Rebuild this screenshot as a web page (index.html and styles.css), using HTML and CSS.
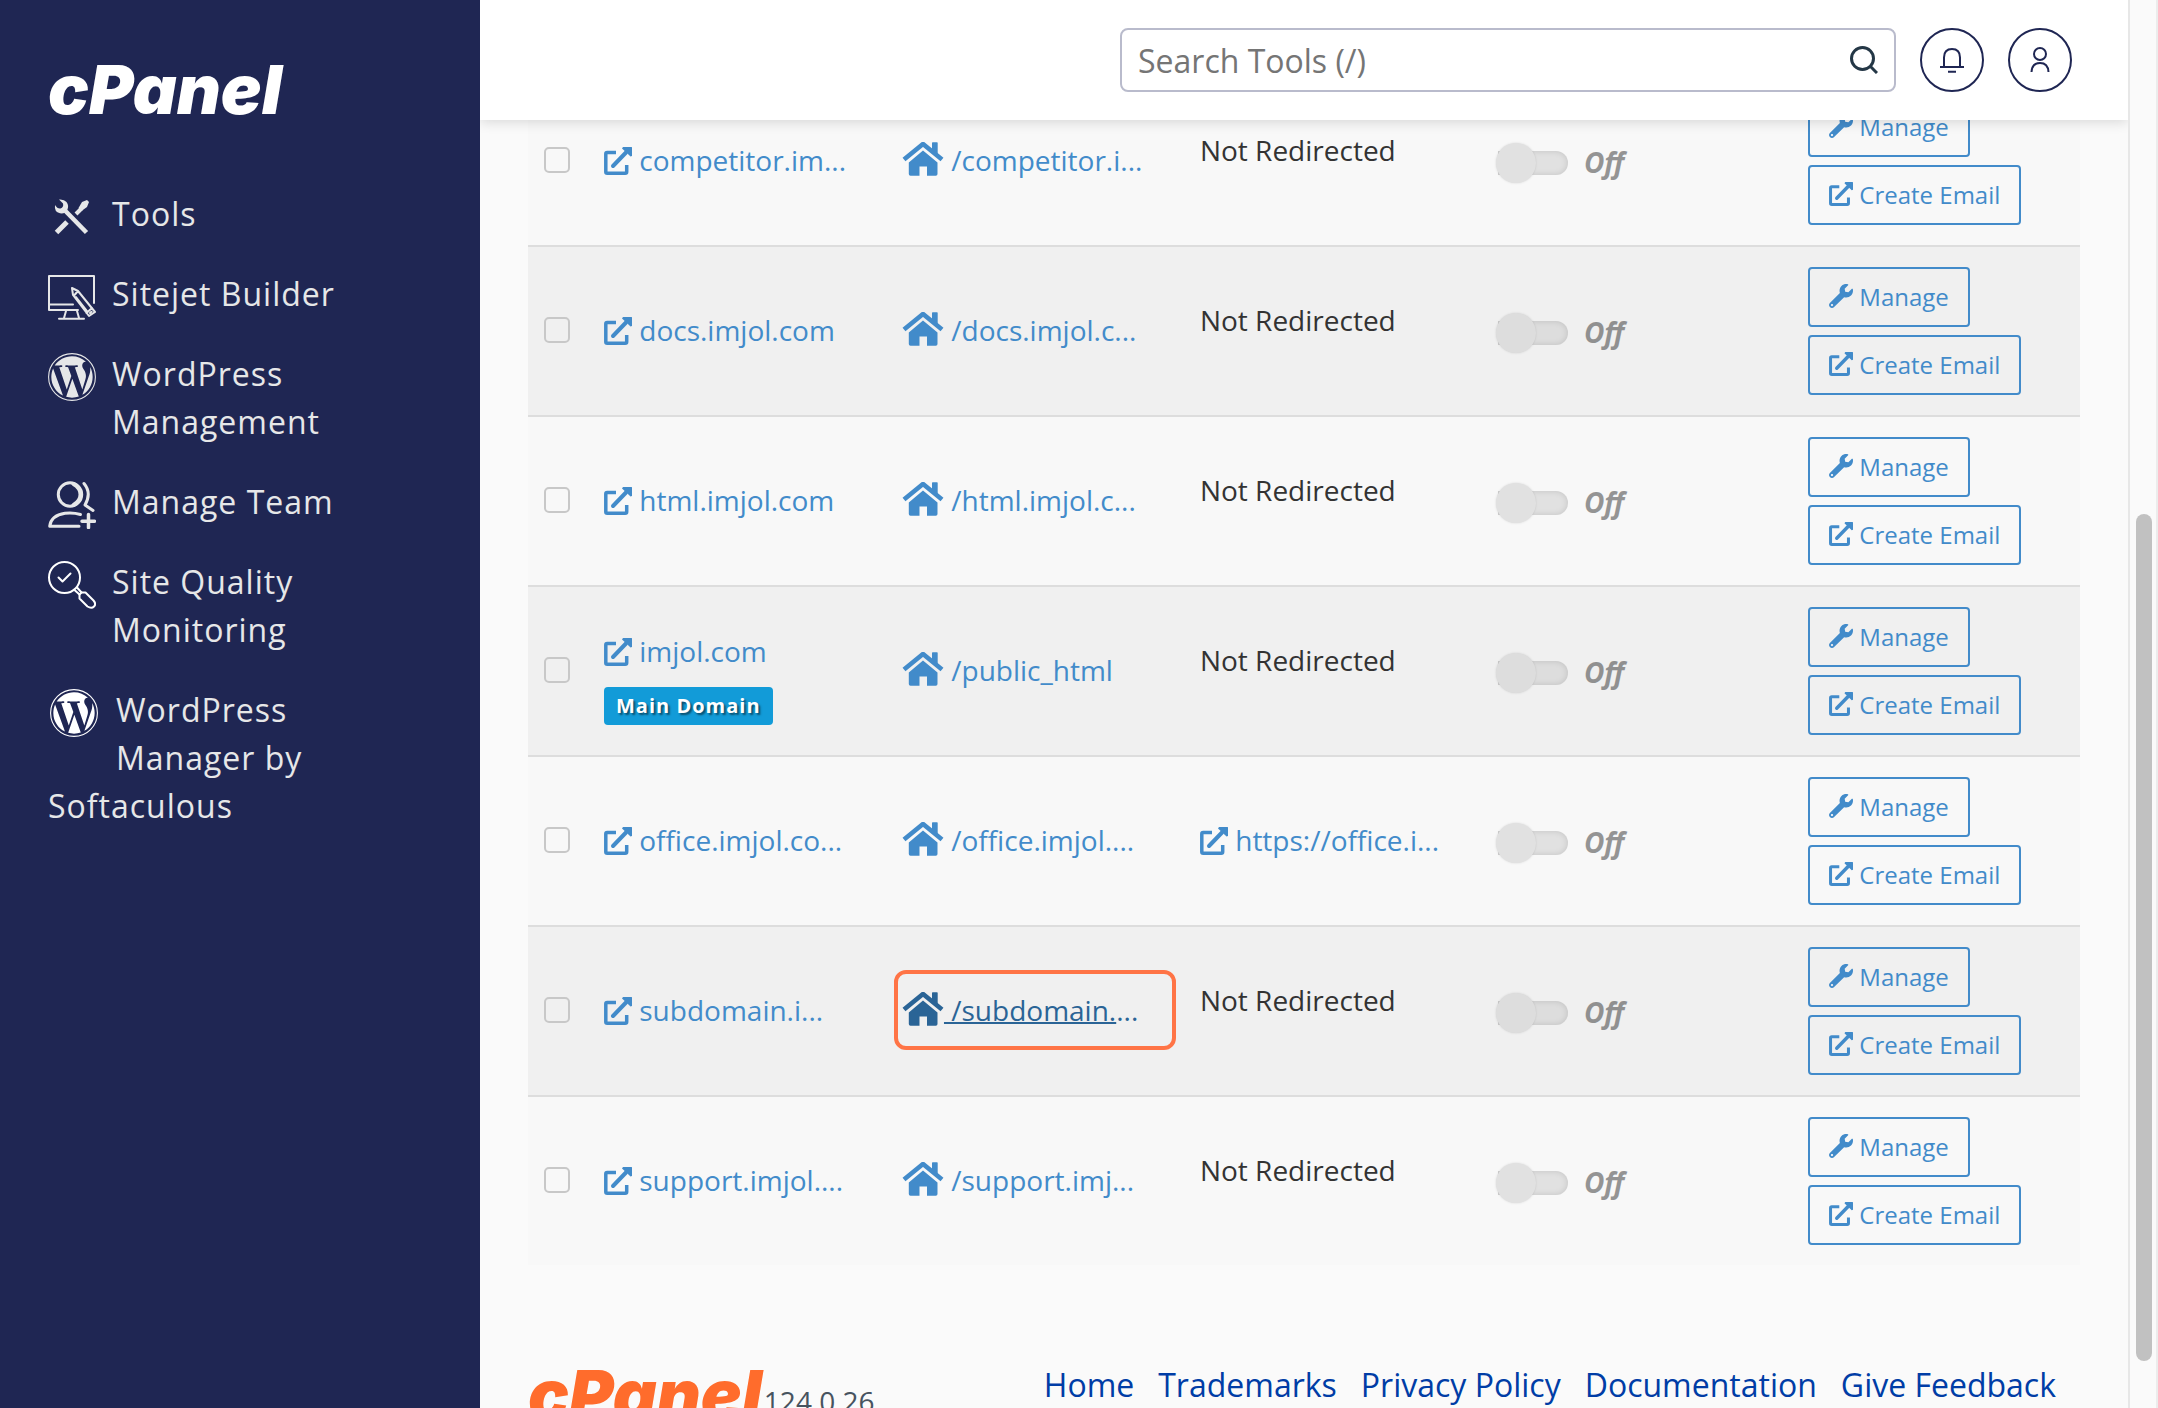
FILE: index.html
```html
<!DOCTYPE html>
<html lang="en">
<head>
  <meta charset="UTF-8">
  <meta name="viewport" content="width=device-width, initial-scale=1">
  <title>cPanel - Domains</title>
  <link rel="stylesheet" href="styles.css">
</head>
<body>
  <!-- shared icons -->
  <svg class="sprite" aria-hidden="true">
    <symbol id="i-external" viewBox="0 0 28 28">
      <path d="M12 5.500H3.200Q1.800 5.500 1.800 7V24.700Q1.800 26.200 3.200 26.200H21.200Q22.700 26.200 22.700 24.700V18" fill="none" stroke="currentColor" stroke-width="3.500"/>
      <path d="M9 19 22 5.500" fill="none" stroke="currentColor" stroke-width="4" stroke-linecap="round"/>
      <path d="M19 0H27.500Q28 0 28 .5V9L26.500 9.500 18 1.500z" fill="currentColor"/>
    </symbol>
    <symbol id="i-home" viewBox="0 0 42 34">
      <path d="M2 17.500 21 2 40 17.500" fill="none" stroke="currentColor" stroke-width="4.600"/>
      <path d="M30 1Q30 .3 30.700 .3H35Q35.700 .3 35.700 1V13L30 8z" fill="currentColor"/>
      <path d="M21 8.500 35.500 20.500V32Q35.500 33.700 33.800 33.700H25V24.500H17.500V33.700H8.500Q6.800 33.700 6.800 32V20.500z" fill="currentColor"/>
    </symbol>
    <symbol id="i-wrench" viewBox="0 0 512 512">
      <path fill="currentColor" d="M507.730 109.100c-2.240-9.030-13.540-12.090-20.120-5.510l-74.360 74.360-67.880-11.310-11.310-67.880 74.360-74.360c6.620-6.620 3.430-17.900-5.660-20.160-47.380-11.740-99.550.91-136.580 37.930-39.640 39.640-50.550 97.100-34.050 147.200L18.740 402.760c-24.990 24.990-24.990 65.510 0 90.500 24.990 24.990 65.510 24.990 90.500 0l213.210-213.210c50.120 16.710 107.470 5.680 147.370-34.220 37.070-37.070 49.700-89.320 37.910-136.730zM64 472c-13.250 0-24-10.750-24-24 0-13.260 10.750-24 24-24s24 10.740 24 24c0 13.250-10.750 24-24 24z"/>
    </symbol>
    <symbol id="i-wordpress" viewBox="0 0 24 24">
      <circle cx="12" cy="12" r="11.700" fill="none" stroke="currentColor" stroke-width=".55"/>
      <g transform="translate(.5 .5) scale(.958)">
        <path fill="currentColor" d="M21.469 6.825c.84 1.537 1.318 3.300 1.318 5.175 0 3.979-2.156 7.456-5.363 9.325l3.295-9.527c.615-1.540.82-2.771.82-3.864 0-.405-.026-.78-.07-1.110m-7.981.105c.647-.03 1.232-.105 1.232-.105.582-.075.514-.93-.067-.899 0 0-1.755.135-2.880.135-1.064 0-2.850-.15-2.850-.15-.585-.03-.661.855-.075.885 0 0 .54.061 1.125.09l1.680 4.605-2.370 7.080L5.354 6.900c.649-.03 1.234-.1 1.234-.1.585-.075.516-.93-.065-.896 0 0-1.746.138-2.874.138-.2 0-.438-.008-.69-.015C4.911 3.150 8.235 1.215 12 1.215c2.809 0 5.365 1.072 7.286 2.833-.046-.003-.091-.009-.141-.009-1.060 0-1.812.923-1.812 1.914 0 .89.513 1.643 1.060 2.531.411.72.89 1.643.89 2.977 0 .915-.354 1.994-.821 3.479l-1.075 3.585-3.900-11.610.001.014zM12 22.784c-1.059 0-2.081-.153-3.048-.437l3.237-9.406 3.315 9.087c.024.053.05.101.078.149-1.120.393-2.325.609-3.582.609M1.211 12c0-1.564.336-3.050.935-4.390L7.290 21.709C3.694 19.960 1.212 16.271 1.211 12"/>
      </g>
    </symbol>
  </svg>

  <div class="layout">
    <aside class="sidebar">
      <a class="logo" href="#" aria-label="cPanel home">cPanel</a>
      <nav class="nav">
        <a class="nav-link" href="#">
          <svg class="nav-icon" viewBox="0 0 48 48">
            <path d="M16.500 17 38.500 39.500" stroke="currentColor" stroke-width="4.500"/>
            <path d="M7 12Q6 19 12 20.300Q17 21 19 17.500Q21.500 13 18.500 9Q16 6 11 6.500L15 10.500Q16 14 12.500 15.500Q9.500 16 7 12z" fill="currentColor"/>
            <path d="M8.500 39.500 19 29" stroke="currentColor" stroke-width="5"/>
            <path d="M28 21 33.500 15.500" stroke="currentColor" stroke-width="4"/>
            <path d="M30.500 15 34 9 39 7 41 9 39 14 33.500 18z" fill="currentColor"/>
          </svg>
          <span>Tools</span>
        </a>
        <a class="nav-link" href="#">
          <svg class="nav-icon" viewBox="0 0 48 48" fill="none" stroke="currentColor" stroke-width="2" stroke-linecap="round" stroke-linejoin="round">
            <path d="M46 30V3H1V37H30M1 31.500H25M18 38 16 45M29 38 31 45M11 45.800H36"/>
            <path d="M24 15 30 18 47 39 41 43 25 22zM26.500 22 30 18M38.500 40 44 35M28 24 39 38M42 40 43.500 38.700"/>
          </svg>
          <span>Sitejet Builder</span>
        </a>
        <a class="nav-link" href="#">
          <svg class="nav-icon"><use href="#i-wordpress"/></svg>
          <span>WordPress Management</span>
        </a>
        <a class="nav-link" href="#">
          <svg class="nav-icon" viewBox="0 0 48 48" fill="none" stroke="currentColor" stroke-width="3" stroke-linecap="round" stroke-linejoin="round">
            <circle cx="22" cy="13.500" r="11.700"/>
            <path d="M25.500 3Q32.500 7 32.500 13.500T25.500 24" stroke-width="4"/>
            <path d="M32.500 33.500Q25 31.300 17 32.300Q3 34.500 1.700 45.300H31"/>
            <path d="M36 2.500Q44 12 37 24L45 29.500"/>
            <path d="M40.500 33.500V46.500M34 40.300H46.500" stroke-width="3.500"/>
          </svg>
          <span>Manage Team</span>
        </a>
        <a class="nav-link" href="#">
          <svg class="nav-icon nav-icon-white" viewBox="0 0 48 48" fill="none" stroke="currentColor" stroke-width="2" stroke-linecap="round" stroke-linejoin="round">
            <circle cx="16.500" cy="16.500" r="15.500"/>
            <path d="M10.500 16.500 14.500 20.500 22.500 12.500"/>
            <path d="M26.500 29 31.500 33.500M29 26.500 33.500 31.500"/>
            <path d="M31.500 37.500V33.500L33.500 31.500H37.500L45.500 39.500Q48.500 43 46 45.500T39.500 45.500z"/>
          </svg>
          <span>Site Quality Monitoring</span>
        </a>
        <a class="nav-link nav-link-plugin" href="#">
          <svg class="nav-icon nav-icon-white"><use href="#i-wordpress"/></svg>
          WordPress Manager by Softaculous
        </a>
      </nav>
    </aside>

    <div class="main">
      <header class="topbar">
        <div class="search">
          <input type="text" class="search-input" placeholder="Search Tools (/)" aria-label="Search Tools">
          <button type="button" class="search-btn" aria-label="Search">
            <svg viewBox="0 0 28 28" fill="none" stroke="currentColor" stroke-width="3">
              <circle cx="12.500" cy="12.500" r="11"/>
              <path d="M20.500 20.500 27 27"/>
            </svg>
          </button>
        </div>
        <button type="button" class="round-btn" aria-label="Notifications">
          <svg viewBox="0 0 28 28" fill="none" stroke="currentColor" stroke-width="2">
            <path d="M6 21V11.500Q6 3 14 3T22 11.500V21M2 21H26M10 25.700H18"/>
          </svg>
        </button>
        <button type="button" class="round-btn" aria-label="User preferences">
          <svg viewBox="0 0 28 28" fill="none" stroke="currentColor" stroke-width="2">
            <circle cx="14" cy="8" r="6"/>
            <path d="M5.500 26Q6 17 14 17T22.500 26"/>
          </svg>
        </button>
      </header>

      <div class="content">
        <table class="domains">
          <colgroup>
            <col class="col-check">
            <col class="col-domain">
            <col class="col-root">
            <col class="col-redirect">
            <col class="col-https">
            <col class="col-actions">
          </colgroup>
          <tbody>
            <tr>
              <td><input type="checkbox" class="check" aria-label="Select competitor.im..."></td>
              <td><a href="#"><svg class="icon-ext"><use href="#i-external"/></svg> competitor.im...</a></td>
              <td><a href="#"><svg class="icon-home"><use href="#i-home"/></svg> /competitor.i...</a></td>
              <td><p class="no-redirect">Not Redirected</p></td>
              <td><label class="toggle"><input type="checkbox" disabled> Off</label></td>
              <td>
                <div class="actions">
                  <button type="button" class="btn"><svg class="icon-btn"><use href="#i-wrench"/></svg>Manage</button>
                  <button type="button" class="btn"><svg class="icon-btn"><use href="#i-external"/></svg>Create Email</button>
                </div>
              </td>
            </tr>
            <tr>
              <td><input type="checkbox" class="check" aria-label="Select docs.imjol.com"></td>
              <td><a href="#"><svg class="icon-ext"><use href="#i-external"/></svg> docs.imjol.com</a></td>
              <td><a href="#"><svg class="icon-home"><use href="#i-home"/></svg> /docs.imjol.c...</a></td>
              <td><p class="no-redirect">Not Redirected</p></td>
              <td><label class="toggle"><input type="checkbox" disabled> Off</label></td>
              <td>
                <div class="actions">
                  <button type="button" class="btn"><svg class="icon-btn"><use href="#i-wrench"/></svg>Manage</button>
                  <button type="button" class="btn"><svg class="icon-btn"><use href="#i-external"/></svg>Create Email</button>
                </div>
              </td>
            </tr>
            <tr>
              <td><input type="checkbox" class="check" aria-label="Select html.imjol.com"></td>
              <td><a href="#"><svg class="icon-ext"><use href="#i-external"/></svg> html.imjol.com</a></td>
              <td><a href="#"><svg class="icon-home"><use href="#i-home"/></svg> /html.imjol.c...</a></td>
              <td><p class="no-redirect">Not Redirected</p></td>
              <td><label class="toggle"><input type="checkbox" disabled> Off</label></td>
              <td>
                <div class="actions">
                  <button type="button" class="btn"><svg class="icon-btn"><use href="#i-wrench"/></svg>Manage</button>
                  <button type="button" class="btn"><svg class="icon-btn"><use href="#i-external"/></svg>Create Email</button>
                </div>
              </td>
            </tr>
            <tr>
              <td><input type="checkbox" class="check" aria-label="Select imjol.com"></td>
              <td>
                <div class="main-domain">
                  <a href="#"><svg class="icon-ext"><use href="#i-external"/></svg> imjol.com</a>
                  <span class="badge">Main Domain</span>
                </div>
              </td>
              <td><a href="#"><svg class="icon-home"><use href="#i-home"/></svg> /public_html</a></td>
              <td><p class="no-redirect">Not Redirected</p></td>
              <td><label class="toggle"><input type="checkbox" disabled> Off</label></td>
              <td>
                <div class="actions">
                  <button type="button" class="btn"><svg class="icon-btn"><use href="#i-wrench"/></svg>Manage</button>
                  <button type="button" class="btn"><svg class="icon-btn"><use href="#i-external"/></svg>Create Email</button>
                </div>
              </td>
            </tr>
            <tr>
              <td><input type="checkbox" class="check" aria-label="Select office.imjol.co..."></td>
              <td><a href="#"><svg class="icon-ext"><use href="#i-external"/></svg> office.imjol.co...</a></td>
              <td><a href="#"><svg class="icon-home"><use href="#i-home"/></svg> /office.imjol....</a></td>
              <td><a href="#"><svg class="icon-ext"><use href="#i-external"/></svg> https://office.i...</a></td>
              <td><label class="toggle"><input type="checkbox" disabled> Off</label></td>
              <td>
                <div class="actions">
                  <button type="button" class="btn"><svg class="icon-btn"><use href="#i-wrench"/></svg>Manage</button>
                  <button type="button" class="btn"><svg class="icon-btn"><use href="#i-external"/></svg>Create Email</button>
                </div>
              </td>
            </tr>
            <tr>
              <td><input type="checkbox" class="check" aria-label="Select subdomain.i..."></td>
              <td><a href="#"><svg class="icon-ext"><use href="#i-external"/></svg> subdomain.i...</a></td>
              <td class="cell-highlight">
                <div class="highlight"><a class="active" href="#"><svg class="icon-home"><use href="#i-home"/></svg><span class="underline"> /subdomain.</span>...</a></div>
              </td>
              <td><p class="no-redirect">Not Redirected</p></td>
              <td><label class="toggle"><input type="checkbox" disabled> Off</label></td>
              <td>
                <div class="actions">
                  <button type="button" class="btn"><svg class="icon-btn"><use href="#i-wrench"/></svg>Manage</button>
                  <button type="button" class="btn"><svg class="icon-btn"><use href="#i-external"/></svg>Create Email</button>
                </div>
              </td>
            </tr>
            <tr>
              <td><input type="checkbox" class="check" aria-label="Select support.imjol...."></td>
              <td><a href="#"><svg class="icon-ext"><use href="#i-external"/></svg> support.imjol....</a></td>
              <td><a href="#"><svg class="icon-home"><use href="#i-home"/></svg> /support.imj...</a></td>
              <td><p class="no-redirect">Not Redirected</p></td>
              <td><label class="toggle"><input type="checkbox" disabled> Off</label></td>
              <td>
                <div class="actions">
                  <button type="button" class="btn"><svg class="icon-btn"><use href="#i-wrench"/></svg>Manage</button>
                  <button type="button" class="btn"><svg class="icon-btn"><use href="#i-external"/></svg>Create Email</button>
                </div>
              </td>
            </tr>
          </tbody>
        </table>

        <footer class="footer">
          <div class="footer-brand">
            <a class="logo logo-orange" href="#">cPanel</a>
            <span class="version">124.0.26</span>
          </div>
          <nav class="footer-links">
            <a href="#">Home</a>
            <a href="#">Trademarks</a>
            <a href="#">Privacy Policy</a>
            <a href="#">Documentation</a>
            <a href="#">Give Feedback</a>
          </nav>
        </footer>
      </div>
    </div>

    <div class="scrollbar"><div class="scrollbar-thumb"></div></div>
  </div>
</body>
</html>
```
FILE: styles.css
```css
* {
  box-sizing: border-box;
}

body {
  margin: 0;
  height: 100vh;
  overflow: hidden;
  font-family: "Open Sans", "Noto Sans", sans-serif;
  font-size: 28px;
  line-height: 40px;
  color: #333;
  background: #fafafa;
}

button,
input {
  font-family: inherit;
}

a {
  color: #428bca;
  text-decoration: none;
}

.sprite {
  display: none;
}

.layout {
  display: flex;
  height: 100%;
}

/* sidebar */
.sidebar {
  flex: 0 0 480px;
  padding: 64px 48px 0;
  background: #1f2653;
}

.logo {
  display: block;
  font-family: Inter, sans-serif;
  font-size: 68px;
  font-weight: 900;
  font-style: italic;
  line-height: 50px;
  color: #fff;
}

.nav {
  margin-top: 60px;
}

.nav-link {
  display: flex;
  gap: 16px;
  padding: 16px 56px 16px 0;
  font-size: 32px;
  line-height: 48px;
  letter-spacing: 1px;
  color: #e6e7e8;
}

.nav-icon {
  flex: none;
  width: 48px;
  height: 48px;
  margin: 3px 0 -3px;
}

.nav-icon-white {
  color: #fff;
}

.nav-link-plugin {
  display: block;
}

.nav-link-plugin .nav-icon {
  float: left;
  margin: 3px 18px 45px 2px;
}

/* main column */
.main {
  flex: 1;
  display: flex;
  flex-direction: column;
  min-width: 0;
}

.topbar {
  position: relative;
  z-index: 1;
  display: flex;
  flex: none;
  align-items: center;
  justify-content: flex-end;
  gap: 24px;
  height: 120px;
  padding: 0 56px;
  background: #fff;
  box-shadow: 0 2px 12px rgba(0, 0, 0, 0.14);
  clip-path: inset(0 0 -20px 0);
}

.search {
  display: flex;
  align-items: center;
  flex: 0 1 776px;
  height: 64px;
  border: 2px solid #b9bbcc;
  border-radius: 8px;
  background: #fff;
}

.search-input {
  flex: 1;
  min-width: 0;
  padding: 2px 16px 0;
  border: 0;
  outline: 0;
  background: none;
  font-size: 32px;
  line-height: 44px;
}

.search-input::placeholder {
  color: #757575;
}

.search-btn {
  display: flex;
  padding: 0 16px;
  border: 0;
  background: none;
  color: #243746;
}

.search-btn svg,
.round-btn svg {
  width: 28px;
  height: 28px;
}

.round-btn {
  display: flex;
  align-items: center;
  justify-content: center;
  width: 64px;
  height: 64px;
  padding: 0;
  border: 2px solid #1f2653;
  border-radius: 50%;
  background: #fff;
  color: #1f2653;
}

.content {
  flex: 1;
  min-height: 0;
  padding: 0 48px;
  overflow: hidden;
}

/* domain list, scrolled part way under the top bar */
.domains {
  width: 100%;
  margin-top: -45px;
  table-layout: fixed;
  border-collapse: separate;
  border-spacing: 0;
}

.col-check {
  width: 60px;
}

.col-domain,
.col-root,
.col-redirect {
  width: 19.2%;
}

.col-https {
  width: 20%;
}

.domains td {
  padding: 0 16px 2px;
  border-top: 2px solid #ddd;
  background: #f8f8f8;
  vertical-align: middle;
  white-space: nowrap;
}

.domains tr:nth-child(even) td {
  background: #f0f0f0;
}

.domains td:last-child {
  padding: 20px 16px;
}

.domains .cell-highlight {
  padding: 0 8px 2px;
}

.check {
  display: block;
  appearance: none;
  width: 26px;
  height: 26px;
  margin: 0;
  border: 2px solid #c8c8c8;
  border-radius: 5px;
}

.icon-ext {
  width: 28px;
  height: 28px;
  vertical-align: -4px;
}

.icon-home {
  width: 42px;
  height: 34px;
  vertical-align: -5px;
}

.main-domain {
  display: flex;
  flex-direction: column;
  align-items: flex-start;
  gap: 16px;
  padding-top: 16px;
}

.badge {
  padding: 0 12px;
  border-radius: 4px;
  background: #129bd8;
  color: #fff;
  font-size: 20px;
  font-weight: 700;
  line-height: 38px;
  letter-spacing: 1px;
  text-shadow: 2px 2px 2px rgba(0, 0, 0, 0.5);
}

.highlight {
  padding: 16px 4px;
  border: 4px solid #ff7446;
  border-radius: 12px;
}

.active {
  color: #2a6496;
}

.underline {
  text-decoration: underline;
  text-decoration-thickness: 2px;
}

.no-redirect {
  margin: 0 0 20px;
}

.toggle {
  display: flex;
  align-items: center;
  gap: 16px;
  margin-top: 4px;
  color: #333;
  font-weight: 700;
  font-style: italic;
  opacity: 0.5;
}

.toggle input {
  position: relative;
  appearance: none;
  width: 70px;
  height: 24px;
  margin: 2px 0 0;
  border-radius: 0 12px 12px 0;
  background: #ccc;
  box-shadow: inset 0 0 6px rgba(0, 0, 0, 0.3);
}

.toggle input::before {
  content: "";
  position: absolute;
  top: -8px;
  left: -2px;
  width: 40px;
  height: 40px;
  border-radius: 50%;
  background: #ccc;
  box-shadow: 0 0 2px rgba(0, 0, 0, 0.3);
}

.actions {
  display: flex;
  flex-direction: column;
  align-items: flex-start;
  gap: 8px;
}

.btn {
  display: flex;
  align-items: center;
  gap: 6px;
  height: 60px;
  padding: 0 19px 2px;
  border: 2px solid #428bca;
  border-radius: 4px;
  background: none;
  color: #428bca;
  font-size: 24px;
}

.icon-btn {
  width: 24px;
  height: 24px;
}

/* footer */
.footer {
  display: flex;
  justify-content: space-between;
  align-items: flex-start;
  padding: 96px 24px 0 0;
}

.footer-brand {
  display: flex;
  align-items: flex-start;
  gap: 2px;
  padding-top: 8px;
}

.logo-orange {
  color: #ff6c2c;
}

.version {
  margin-top: 12px;
  color: #47535f;
}

.footer-links {
  display: flex;
  gap: 24px;
  font-size: 32px;
  line-height: 48px;
}

.footer-links a {
  color: #003da6;
}

/* scrollbar */
.scrollbar {
  display: flex;
  flex: 0 0 30px;
  flex-direction: column;
  justify-content: flex-end;
  padding: 0 4px 47px 6px;
  border-left: 2px solid #e7e7e7;
  border-right: 2px solid #ececec;
  background: #fafafa;
}

.scrollbar-thumb {
  width: 16px;
  height: 62.2%;
  border-radius: 8px;
  background: #c1c1c1;
}
```
